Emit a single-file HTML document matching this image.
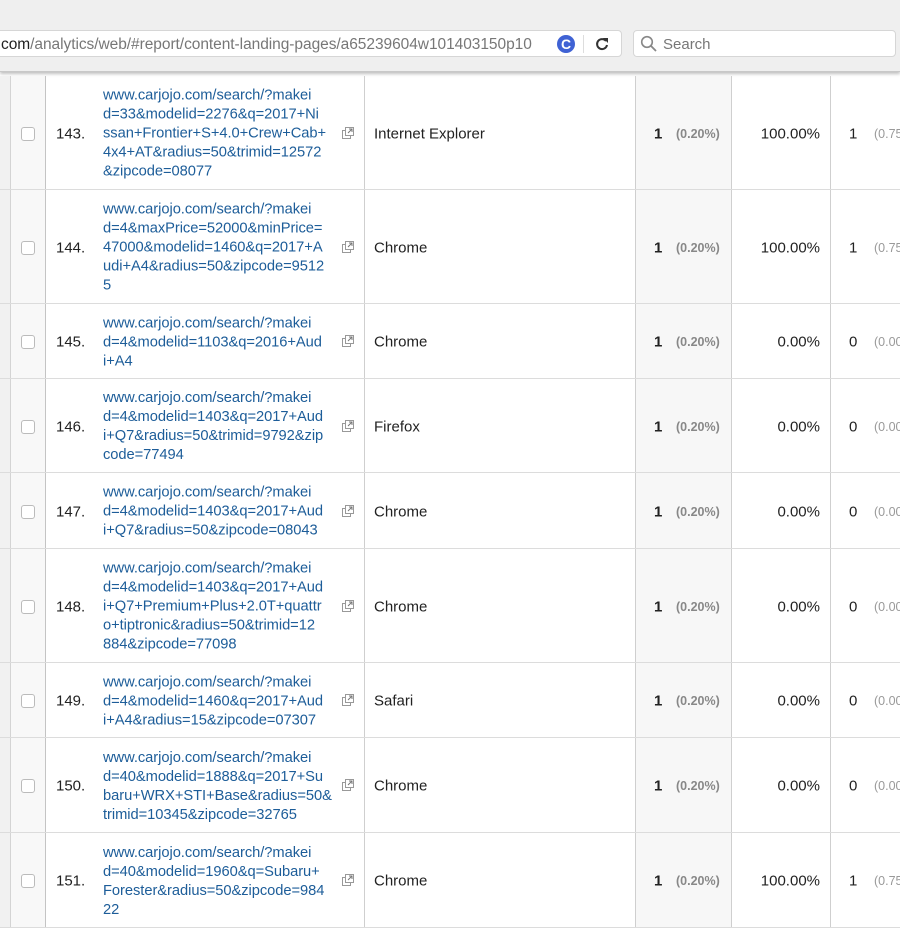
<!DOCTYPE html>
<html><head><style>
*{margin:0;padding:0;box-sizing:border-box}
body{width:900px;height:926px;overflow:hidden;background:#fff;font-family:"Liberation Sans",Arial,sans-serif;position:relative}
#bar{position:absolute;left:0;top:0;width:900px;height:72px;background:#efefef;border-bottom:1px solid #c8c8c8;box-shadow:0 2px 3px rgba(0,0,0,.25)}
#url{position:absolute;left:-6px;top:30px;width:628px;height:27px;background:#fff;border:1px solid #d6d6d6;border-radius:4px;font-size:15.5px;color:#777;line-height:27px;padding-left:6px;white-space:nowrap;letter-spacing:-.05px}
#url b{font-weight:normal;color:#222}
#srch{position:absolute;left:633px;top:30px;width:263px;height:27px;background:#fff;border:1px solid #d6d6d6;border-radius:4px;font-size:15px;color:#777;line-height:27px;padding-left:29px}
.row{position:absolute;left:0;width:900px;border-bottom:1px solid #dcdcdc}
.c{position:absolute;top:0;bottom:0}
.l{left:0;width:11px;background:#f1f1f1;border-right:1px solid #d4d4d4}
.cb{left:11px;width:35px;background:#f8f8f8;border-right:1px solid #c4c4c4}
.cb i{position:absolute;left:10px;top:50%;margin-top:-6px;width:14px;height:14px;border:1px solid #bbb;border-radius:3px;background:#fff}
.n{left:46px;width:319px;border-right:1px solid #cfcfcf}
.num{position:absolute;left:10px;top:50%;transform:translateY(-50%);margin-top:1px;font-size:15px;color:#222}
.u{position:absolute;left:57px;top:50%;transform:translateY(-50%);margin-top:1.5px;font-size:14.7px;line-height:19px;color:#1d5d99;white-space:nowrap;letter-spacing:-.05px}
.ext{position:absolute;left:296px;top:50%;margin-top:-6px;width:13px;height:13px}
.br{left:365px;width:271px;border-right:1px solid #cfcfcf}
.br span,.s span,.p span,.x span{position:absolute;top:50%;transform:translateY(-50%);margin-top:1px;font-size:15px;color:#222;white-space:nowrap}
.br span{left:9px}
.s{left:636px;width:96px;background:#f7f7f7;border-right:1px solid #cfcfcf}
.s .a{left:18px;font-weight:bold}
.s .g,.x .g{font-size:12.5px;color:#888;font-weight:bold}
.s .g{left:40px}
.p{left:732px;width:99px;border-right:1px solid #cfcfcf}
.p span{right:10px}
.x{left:831px;width:69px}
.x .a{left:18px}
.x .g{left:43px;font-weight:normal;color:#999}
</style></head><body>
<div id="bar">
<div id="url"><b>com</b>/analytics/web/#report/content-landing-pages/a65239604w101403150p10
<svg style="position:absolute;left:561px;top:3px" width="20" height="20"><circle cx="10" cy="10" r="9" fill="#3f62d4"/><text x="10" y="15" font-size="14" font-weight="bold" fill="#fff" text-anchor="middle" font-family="Liberation Sans">C</text></svg>
<div style="position:absolute;left:588px;top:4px;width:1px;height:18px;background:#ddd"></div>
<svg style="position:absolute;left:600px;top:6px" width="14" height="14" viewBox="0 0 14 14"><path d="M11 4A5 5 0 1 0 12 8" fill="none" stroke="#333" stroke-width="2"/><path d="M8 1L13 1L13 6Z" fill="#333"/></svg>
</div>
<div id="srch"><svg style="position:absolute;left:6px;top:4px" width="17" height="17"><circle cx="7" cy="7" r="5.3" fill="none" stroke="#888" stroke-width="1.6"/><path d="M10.8 10.8L16 16" stroke="#888" stroke-width="1.8"/></svg>Search</div>
</div>

<div id="rows"></div>
<script>
var R=[
[76,114,"143.",["www.carjojo.com/search/?makei","d=33&modelid=2276&q=2017+Ni","ssan+Frontier+S+4.0+Crew+Cab+","4x4+AT&radius=50&trimid=12572","&zipcode=08077"],"Internet Explorer","100.00%","1","(0.75"],
[190,114,"144.",["www.carjojo.com/search/?makei","d=4&maxPrice=52000&minPrice=","47000&modelid=1460&q=2017+A","udi+A4&radius=50&zipcode=9512","5"],"Chrome","100.00%","1","(0.75"],
[304,75,"145.",["www.carjojo.com/search/?makei","d=4&modelid=1103&q=2016+Aud","i+A4"],"Chrome","0.00%","0","(0.00"],
[379,94,"146.",["www.carjojo.com/search/?makei","d=4&modelid=1403&q=2017+Aud","i+Q7&radius=50&trimid=9792&zip","code=77494"],"Firefox","0.00%","0","(0.00"],
[473,76,"147.",["www.carjojo.com/search/?makei","d=4&modelid=1403&q=2017+Aud","i+Q7&radius=50&zipcode=08043"],"Chrome","0.00%","0","(0.00"],
[549,114,"148.",["www.carjojo.com/search/?makei","d=4&modelid=1403&q=2017+Aud","i+Q7+Premium+Plus+2.0T+quattr","o+tiptronic&radius=50&trimid=12","884&zipcode=77098"],"Chrome","0.00%","0","(0.00"],
[663,75,"149.",["www.carjojo.com/search/?makei","d=4&modelid=1460&q=2017+Aud","i+A4&radius=15&zipcode=07307"],"Safari","0.00%","0","(0.00"],
[738,95,"150.",["www.carjojo.com/search/?makei","d=40&modelid=1888&q=2017+Su","baru+WRX+STI+Base&radius=50&","trimid=10345&zipcode=32765"],"Chrome","0.00%","0","(0.00"],
[833,95,"151.",["www.carjojo.com/search/?makei","d=40&modelid=1960&q=Subaru+","Forester&radius=50&zipcode=984","22"],"Chrome","100.00%","1","(0.75"]];
var h="";
function esc(s){return s.replace(/&/g,"&amp;")}
R.forEach(function(r){
h+='<div class="row" style="top:'+r[0]+'px;height:'+r[1]+'px"><div class="c l"></div><div class="c cb"><i></i></div>'+
'<div class="c n"><span class="num">'+r[2]+'</span><div class="u">'+r[3].map(esc).join("<br>")+'</div>'+
'<svg class="ext" viewBox="0 0 13 13"><rect x="0.5" y="3.5" width="8" height="8" fill="#fff" stroke="#999"/><rect x="3.5" y="0.5" width="8" height="8" fill="#fff" stroke="#999"/><path d="M6 6L10 2M7 2H10V5" stroke="#777" fill="none"/></svg></div>'+
'<div class="c br"><span>'+r[4]+'</span></div><div class="c s"><span class="a">1</span><span class="g">(0.20%)</span></div>'+
'<div class="c p"><span>'+r[5]+'</span></div><div class="c x"><span class="a">'+r[6]+'</span><span class="g">'+r[7]+'</span></div></div>';
});
document.getElementById("rows").innerHTML=h;
</script>
</body></html>
